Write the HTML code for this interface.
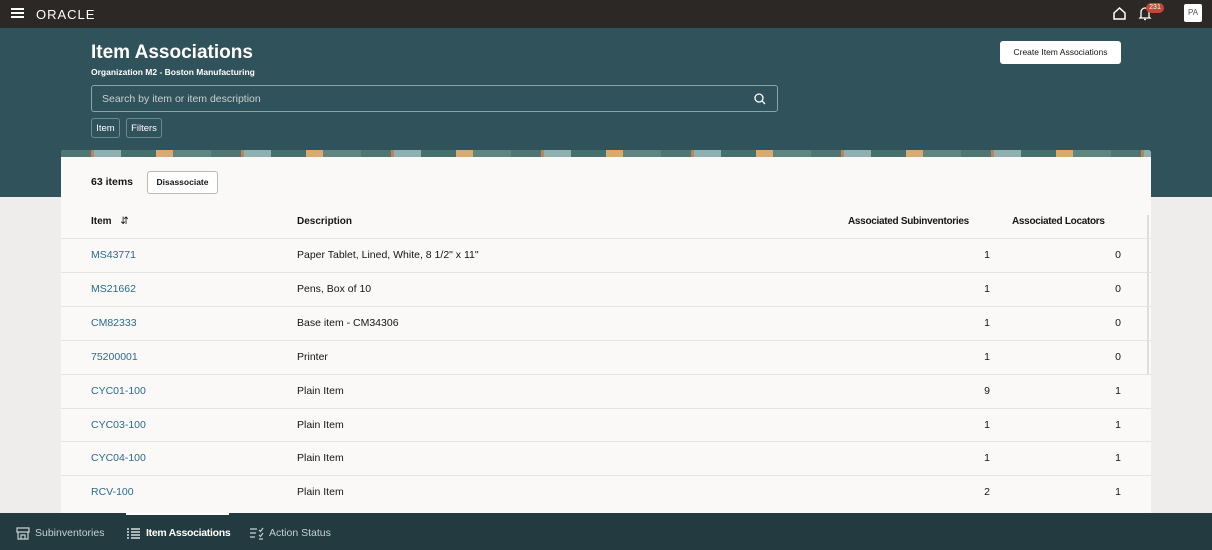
<!DOCTYPE html>
<html><head><style>
*{margin:0;padding:0;box-sizing:border-box}
body{width:1212px;height:550px;overflow:hidden;font-family:"Liberation Sans",sans-serif;background:#eeedeb;position:relative;font-size:10.5px;color:#161513}
.top{position:absolute;left:0;top:0;width:1212px;height:28px;background:#2b2825}
.hdr{position:absolute;left:0;top:28px;width:1212px;height:169px;background:#30525a}
.card{position:absolute;left:61px;top:150px;width:1090px;height:363px;background:#faf9f8;overflow:hidden;border-radius:3px 3px 0 0}
.strip{position:absolute;left:0;top:0;width:1090px;height:7px;background:repeating-linear-gradient(90deg,#4f7672 0 30px,#b98655 30px 33px,#8fb0b0 33px 60px,#46706c 60px 95px,#d8aa72 95px 112px,#5f8580 112px 150px)}
.row{position:absolute;left:0;width:1090px;height:34px;border-top:1px solid #e6e4e1;line-height:33px}
.row span{position:absolute}
.a{left:30px;color:#2a6b8f}
.d{left:236px}
.s{right:161px}
.l{right:30px}
.bot{position:absolute;left:0;top:513px;width:1212px;height:37px;background:#233a40;color:#c8d2d4;font-size:10.5px}
.btn{position:absolute;border:1px solid #6d8a8f;border-radius:3px;color:#fff;font-size:9.5px;text-align:center}
.h{position:absolute;top:66px;font-weight:bold;font-size:10px}
</style></head><body>
<div class="top">
 <div style="position:absolute;left:11px;top:8px;width:13px;height:2px;background:#fff;box-shadow:0 4px 0 #fff,0 8px 0 #fff"></div>
 <div style="position:absolute;left:36px;top:7px;color:#fff;font-size:13px;letter-spacing:1px">ORACLE</div>
 <svg style="position:absolute;left:1112px;top:6px" width="15" height="15" viewBox="0 0 15 15"><path d="M2 7L7.5 2 13 7V13H2Z" fill="none" stroke="#fff" stroke-width="1.5"/></svg>
 <svg style="position:absolute;left:1138px;top:6px" width="14" height="15" viewBox="0 0 14 15"><path d="M3 11V6a4 4 0 0 1 8 0v5l1 1H2ZM6 13.5h2" fill="none" stroke="#fff" stroke-width="1.3"/></svg>
 <div style="position:absolute;left:1146px;top:3px;width:18px;height:10px;background:#c74634;border-radius:5px;color:#fff;font-size:7px;text-align:center;line-height:10px">231</div>
 <div style="position:absolute;left:1184px;top:4px;width:18px;height:18px;background:#fff;border-radius:2px;color:#555;font-size:8px;text-align:center;line-height:18px">PA</div>
</div>
<div class="hdr">
 <div style="position:absolute;left:91px;top:14px;color:#fff;font-size:19px;font-weight:bold">Item Associations</div>
 <div style="position:absolute;left:91px;top:39px;color:#fff;font-size:8.5px;font-weight:bold">Organization M2 - Boston Manufacturing</div>
 <div style="position:absolute;left:91px;top:57px;width:687px;height:27px;border:1px solid #8aa3a7;border-radius:3px;color:#c6d2d4;font-size:10.5px;line-height:27px;padding-left:10px">Search by item or item description
  <svg style="position:absolute;right:11px;top:7px" width="12" height="12" viewBox="0 0 12 12"><circle cx="5" cy="5" r="4" fill="none" stroke="#fff" stroke-width="1.3"/><path d="M8 8l3 3" stroke="#fff" stroke-width="1.3"/></svg></div>
 <div class="btn" style="left:91px;top:90px;width:29px;height:20px;line-height:19px">Item</div>
 <div class="btn" style="left:126px;top:90px;width:36px;height:20px;line-height:19px">Filters</div>
 <div style="position:absolute;left:1000px;top:13px;width:121px;height:23px;background:#fff;border-radius:3px;font-size:8.5px;text-align:center;line-height:23px;color:#161513">Create Item Associations</div>
</div>
<div class="card">
 <div class="strip"></div>
 <div style="position:absolute;left:30px;top:26px;font-size:10.5px;font-weight:bold">63 items</div>
 <div style="position:absolute;left:86px;top:21px;width:71px;height:23px;border:1px solid #bcb8b3;border-radius:3px;background:#fff;font-size:8.5px;font-weight:bold;text-align:center;line-height:21px">Disassociate</div>
 <div class="h" style="left:30px">Item <span style="margin-left:6px;font-weight:normal">&#8693;</span></div>
 <div class="h" style="left:236px">Description</div>
 <div class="h" style="left:787px;letter-spacing:-0.3px">Associated Subinventories</div>
 <div class="h" style="left:951px;letter-spacing:-0.3px">Associated Locators</div>
 <div style="position:absolute;left:1086px;top:65px;width:2px;height:160px;background:#e0dedb"></div>
 <div class="row" style="top:88px"><span class="a">MS43771</span><span class="d">Paper Tablet, Lined, White, 8 1/2" x 11"</span><span class="s">1</span><span class="l">0</span></div>
 <div class="row" style="top:122px"><span class="a">MS21662</span><span class="d">Pens, Box of 10</span><span class="s">1</span><span class="l">0</span></div>
 <div class="row" style="top:156px"><span class="a">CM82333</span><span class="d">Base item - CM34306</span><span class="s">1</span><span class="l">0</span></div>
 <div class="row" style="top:190px"><span class="a">75200001</span><span class="d">Printer</span><span class="s">1</span><span class="l">0</span></div>
 <div class="row" style="top:224px"><span class="a">CYC01-100</span><span class="d">Plain Item</span><span class="s">9</span><span class="l">1</span></div>
 <div class="row" style="top:258px"><span class="a">CYC03-100</span><span class="d">Plain Item</span><span class="s">1</span><span class="l">1</span></div>
 <div class="row" style="top:291px"><span class="a">CYC04-100</span><span class="d">Plain Item</span><span class="s">1</span><span class="l">1</span></div>
 <div class="row" style="top:325px"><span class="a">RCV-100</span><span class="d">Plain Item</span><span class="s">2</span><span class="l">1</span></div>
</div>
<div class="bot">
 <div style="position:absolute;left:126px;top:0;width:103px;height:2px;background:#fff"></div>
 <svg style="position:absolute;left:16px;top:14px" width="14" height="13" viewBox="0 0 14 13"><path d="M1 1h12v4H1zM2 5v7h10V5M5 12V8h4v4" fill="none" stroke="#c8d2d4" stroke-width="1.2"/></svg>
 <div style="position:absolute;left:35px;top:14px">Subinventories</div>
 <svg style="position:absolute;left:127px;top:15px" width="13" height="11" viewBox="0 0 13 11"><path d="M0 1h2M4 1h9M0 4h2M4 4h9M0 7h2M4 7h9M0 10h2M4 10h9" stroke="#fff" stroke-width="1.3"/></svg>
 <div style="position:absolute;left:146px;top:14px;color:#fff;font-weight:bold;letter-spacing:-0.3px">Item Associations</div>
 <svg style="position:absolute;left:250px;top:14px" width="14" height="13" viewBox="0 0 14 13"><path d="M0 2h7M0 6h6M0 10h5M9 3l1.5 1.5L13 1M9 8l1.5 1.5L13 6M9 12h4" fill="none" stroke="#c8d2d4" stroke-width="1.2"/></svg>
 <div style="position:absolute;left:269px;top:14px">Action Status</div>
</div>
</body></html>
